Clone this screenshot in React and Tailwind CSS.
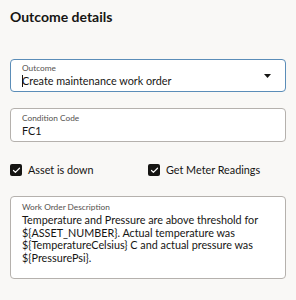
import { Check } from 'lucide-react';

const font = { fontFamily: 'Lato, "Noto Sans", sans-serif' };

function Field({ label, children, className = '' }) {
    return (
        <div className={`rounded-[4px] bg-white px-[11px] ${className}`}>
            <div className="text-[8.3px] leading-[11px] text-[#55524f]">{label}</div>
            {children}
        </div>
    );
}

function CheckItem({ label }) {
    return (
        <div className="flex items-center gap-[6px]">
            <span className="flex h-[12px] w-[12px] items-center justify-center rounded-[2px] bg-[#161513]">
                <Check className="h-[9px] w-[9px] text-white" strokeWidth={3.2} />
            </span>
            <span className="text-[10.8px] leading-[14px] text-[#161513]">{label}</span>
        </div>
    );
}

export default function App() {
    return (
        <div className="h-[300px] w-[296px] bg-[#f9f8f6] px-[10px] pt-[8px]" style={font}>
            <h2 className="text-[14px] font-bold leading-[18px] text-[#161513]">Outcome details</h2>

            {/* Outcome select (focused) */}
            <Field label="Outcome" className="mt-[33px] flex h-[33px] flex-col justify-center border border-[#5b8db8] pr-[14px]">
                <div className="flex items-center justify-between">
                    <div className="relative text-[10.8px] leading-[14px] text-[#161513]">
                        <span className="absolute left-0 top-[1px] h-[12px] w-px bg-[#161513]" />
                        Create maintenance work order
                    </div>
                    <svg width="7" height="4" viewBox="0 0 7 4" className="-mt-[11px]">
                        <path d="M0 0h7L3.5 4z" fill="#161513" />
                    </svg>
                </div>
            </Field>

            <Field label="Condition Code" className="mt-[16px] flex h-[34px] flex-col justify-center border border-[#b5b1ad]">
                <div className="text-[10.8px] leading-[14px] text-[#161513]">FC1</div>
            </Field>

            <div className="mt-[21px] grid grid-cols-[138px_1fr]">
                <CheckItem label="Asset is down" />
                <CheckItem label="Get Meter Readings" />
            </div>

            <Field label="Work Order Description" className="mt-[19px] h-[83px] border border-[#b5b1ad] pt-[5px]">
                <p className="mt-[1px] text-[10.8px] leading-[12.7px] text-[#161513]">
                    Temperature and Pressure are above threshold for ${'{'}ASSET_NUMBER{'}'}. Actual temperature was ${'{'}TemperatureCelsius{'}'} C and actual pressure was ${'{'}PressurePsi{'}'}.
                </p>
            </Field>
        </div>
    );
}
